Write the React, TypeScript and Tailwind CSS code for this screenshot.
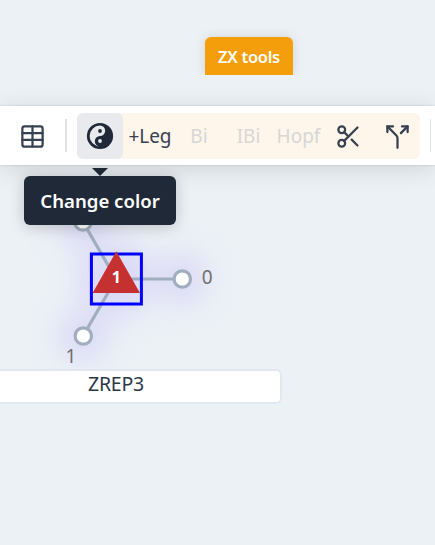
import React from "react";
import { Table, Scissors, Split } from "lucide-react";

function YinYang() {
  return (
    <svg width="28" height="28" viewBox="0 0 28 28" className="shrink-0">
      <circle cx="14" cy="14" r="13.1" fill="#1f2937" />
      <path
        d="M14 3.6 A10.4 10.4 0 0 0 14 24.4 A5.2 5.2 0 0 1 14 14 A5.2 5.2 0 0 0 14 3.6Z"
        fill="#e8eaee"
      />
      <circle cx="14" cy="9" r="1.9" fill="#1f2937" />
      <circle cx="14" cy="19" r="1.9" fill="#e8eaee" />
    </svg>
  );
}

function Diagram() {
  return (
    <svg width="435" height="380" viewBox="0 0 435 380" className="absolute left-0 top-0">
      <defs>
        <filter id="halo" x="-100%" y="-100%" width="300%" height="300%">
          <feGaussianBlur stdDeviation="15" />
        </filter>
      </defs>
      <g filter="url(#halo)" fill="#c9c2f7" opacity="0.5">
        <circle cx="83" cy="222" r="25" />
        <circle cx="182" cy="279" r="25" />
        <circle cx="83" cy="336" r="25" />
        <circle cx="116" cy="279" r="38" />
      </g>
      <g stroke="#a0aebf" strokeWidth="3.2">
        <path d="M83 222 L116 279 H182 M116 279 L83 336" fill="none" />
        <circle cx="83" cy="222" r="8.2" fill="#fff" />
        <circle cx="182.3" cy="279" r="8.2" fill="#fff" />
        <circle cx="83.3" cy="336" r="8.2" fill="#fff" />
      </g>
      <rect x="91.4" y="254" width="50" height="50" fill="none" stroke="#0000ff" strokeWidth="3" />
      <path d="M116.3 251.3 L140 293 H92.6Z" fill="#c53030" />
      <text x="116.3" y="283" fontSize="16" fontWeight="700" textAnchor="middle" fill="#fff">1</text>
      <text x="207.2" y="284" fontSize="19" textAnchor="middle" fill="#707070">0</text>
      <text x="71" y="363" fontSize="19" textAnchor="middle" fill="#707070">1</text>
    </svg>
  );
}

export default function App() {
  return (
    <div className="relative h-[545px] w-[435px] overflow-hidden bg-[#ecf1f6] font-['Noto_Sans',sans-serif] text-[#374151]">
      <Diagram />
      <div className="relative flex h-[106px] pl-[205px] pt-[37px]">
        <div className="flex h-[38px] w-[88px] items-center justify-center rounded-t-md bg-[#f59e0b] text-[16.5px] font-semibold tracking-[-0.3px] text-white shadow-[0_0_12px_rgba(0,0,0,0.12)] [clip-path:inset(-12px_-12px_0)]">
          <span className="whitespace-nowrap pt-0.5">ZX tools</span>
        </div>
      </div>
      <div className="relative flex h-[59px] items-center bg-white shadow-[0_0_2px_rgba(0,0,0,0.18),0_4px_24px_rgba(0,0,0,0.12)]">
        <div className="flex w-[65px] justify-center pt-px">
          <Table size={27} strokeWidth={2} />
        </div>
        <div className="h-[33px] w-0.5 bg-[#e2e3e5]" />
        <div className="ml-[10px] flex h-[46px] w-[343px] items-center rounded-md bg-[#fef5eb] text-[19px] text-[#d6d7d6]">
          <button className="flex h-[46px] w-[46px] items-center justify-center rounded-md bg-[#e8eaee]">
            <YinYang />
          </button>
          <span className="w-[54px] pt-0.5 text-center tracking-[-0.1px] text-[#374151]">+Leg</span>
          <span className="w-[44px] pt-0.5 text-center">Bi</span>
          <span className="w-[55px] pt-0.5 text-center">IBi</span>
          <span className="w-[45px] pt-0.5 text-center">Hopf</span>
          <span className="flex w-[54px] justify-center pt-px text-[#374151]">
            <Scissors size={27} />
          </span>
          <span className="flex w-[45px] justify-center pt-px text-[#374151]">
            <Split size={27} />
          </span>
        </div>
        <div className="ml-[10px] h-[33px] w-px bg-[#e2e3e5]" />
      </div>
      <div className="relative ml-[-10px] mt-[204px] flex h-[35px] w-[292px] justify-center rounded-md border-2 border-[#e2e8f0] bg-white text-[19.5px] leading-[25px] text-[#2d3748]">
        <span className="-ml-[40px] tracking-[-0.2px]">ZREP3</span>
      </div>
      <div className="absolute left-[92px] top-[168px] h-2 w-4 bg-[#1f2937] [clip-path:polygon(0_0,100%_0,50%_100%)]" />
      <div className="absolute left-6 top-[176px] flex h-[49px] w-[152px] items-center justify-center whitespace-nowrap rounded-md bg-[#1f2937] text-[18.6px] font-semibold text-white shadow-[0_2px_16px_rgba(0,0,0,0.2)]">
        Change color
      </div>
    </div>
  );
}
